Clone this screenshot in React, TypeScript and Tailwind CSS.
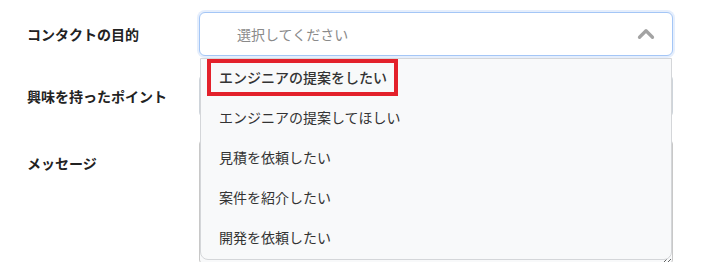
import React from "react";
import { ChevronUp } from "lucide-react";

const options = [
    "エンジニアの提案をしたい",
    "エンジニアの提案してほしい",
    "見積を依頼したい",
    "案件を紹介したい",
    "開発を依頼したい",
];

const font = "font-['Noto_Sans_CJK_JP','Noto_Sans',sans-serif]";

export default function App() {
    return (
        <div className={`h-[262px] w-[728px] overflow-hidden bg-white ${font}`}>
            <div className="flex flex-col pl-[27px] pr-[55px] pt-[12px]">
                <div className="flex h-[44px] items-center">
                    <div className="w-[172px] text-[14px] font-bold text-[#222]">コンタクトの目的</div>
                    <div className="relative flex-1">
                        <div className="flex h-[44px] items-center justify-between rounded-[6px] border border-[#a4c6f6] bg-white pl-[37px] pr-[13px] shadow-[0_0_0_2px_rgba(170,200,245,0.3)]">
                            <span className="text-[14px] text-[#8a8a8a]">選択してください</span>
                            <ChevronUp className="h-[26px] w-[26px] text-[#a3a3a3]" strokeWidth={3} />
                        </div>
                        <ul className="absolute left-[1px] right-[1px] top-[46px] z-10 rounded-b-[8px] border border-[#d4d6d9] bg-[#f8f9fa]">
                            {options.map((o, i) => (
                                <li
                                    key={o}
                                    className={`relative flex h-[40px] items-center pb-[3px] pl-[18px] text-[14px] text-[#333] ${i === 0 ? "font-medium" : ""}`}
                                >
                                    {o}
                                    {i === 0 && (
                                        <span className="absolute left-[6px] top-[0px] h-[37px] w-[191px] border-4 border-[#e3212b]" />
                                    )}
                                </li>
                            ))}
                        </ul>
                    </div>
                </div>
                <div className="mt-[18px] flex h-[44px] items-center">
                    <div className="w-[172px] text-[14px] font-bold text-[#222]">興味を持ったポイント</div>
                    <div className="h-[44px] flex-1 rounded-[6px] border border-[#ced4da] bg-white" />
                </div>
                <div className="mt-[22px] flex">
                    <div className="w-[172px] pt-[13px] text-[14px] font-bold text-[#222]">メッセージ</div>
                    <textarea className="h-[124px] flex-1 rounded-[4px] border border-[#c8c8c8] bg-[#f8f9fa]" />
                </div>
            </div>
        </div>
    );
}
